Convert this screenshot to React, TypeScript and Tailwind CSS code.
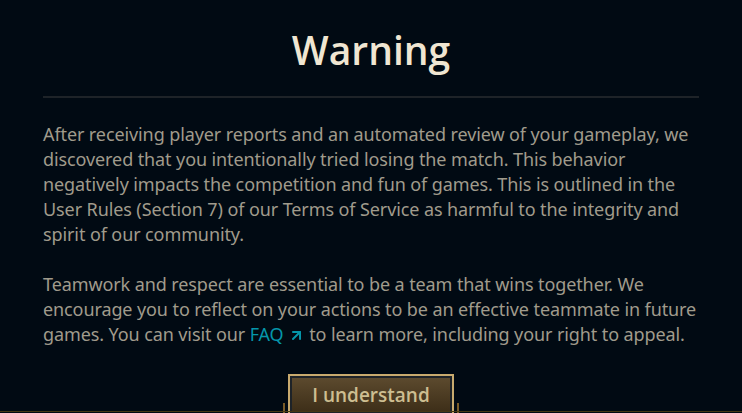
import { ArrowUpRight } from "lucide-react";

const App = () => {
  return (
    <div className="relative h-[413px] w-[742px] overflow-hidden bg-[#010a13]">
      <div className="flex flex-col items-center px-[43px] pt-[24px]">
        <h1 className="font-['Open_Sans',sans-serif] text-[39px] font-semibold leading-[52px] text-[#f0e6d2]">
          Warning
        </h1>
        <div className="mt-[20px] h-[2px] w-full bg-[#1e2328]" />
        <div className="mt-[24px] w-full whitespace-nowrap font-['Noto_Sans',sans-serif] text-[18px] leading-[25px] tracking-[-0.1px] text-[#a09b8c]">
          <p>
            After receiving player reports and an automated review of your gameplay, we
            <br />
            discovered that you intentionally tried losing the match. This behavior
            <br />
            negatively impacts the competition and fun of games. This is outlined in the
            <br />
            User Rules (Section 7) of our Terms of Service as harmful to the integrity and
            <br />
            spirit of our community.
          </p>
          <p className="mt-[25px]">
            Teamwork and respect are essential to be a team that wins together. We
            <br />
            encourage you to reflect on your actions to be an effective teammate in future
            <br />
            games. You can visit our{" "}
            <a className="inline-flex items-center gap-[4px] text-[#0596aa]">
              FAQ
              <ArrowUpRight size={17} strokeWidth={2.75} className="mt-[2px]" />
            </a>{" "}
            to learn more, including your right to appeal.
          </p>
        </div>
        <div className="mt-[27px] flex items-end">
          <div className="h-[13px] w-[2px] self-end bg-[#785a28]" />
          <button className="ml-[3px] mr-[3px] h-[42px] w-[166px] border-2 border-[#c8aa6e] bg-[#1e2328] p-[2px]">
            <div className="flex h-full w-full items-center justify-center bg-gradient-to-b from-[#5c4a2e] to-[#3d2e18] font-['Open_Sans',sans-serif] text-[19px] font-semibold text-[#cdbe91]">
              I understand
            </div>
          </button>
          <div className="h-[13px] w-[2px] self-end bg-[#785a28]" />
        </div>
      </div>
      <div className="absolute bottom-[1px] left-0 h-[1px] w-full bg-[#463714]" />
    </div>
  );
};

export default App;
